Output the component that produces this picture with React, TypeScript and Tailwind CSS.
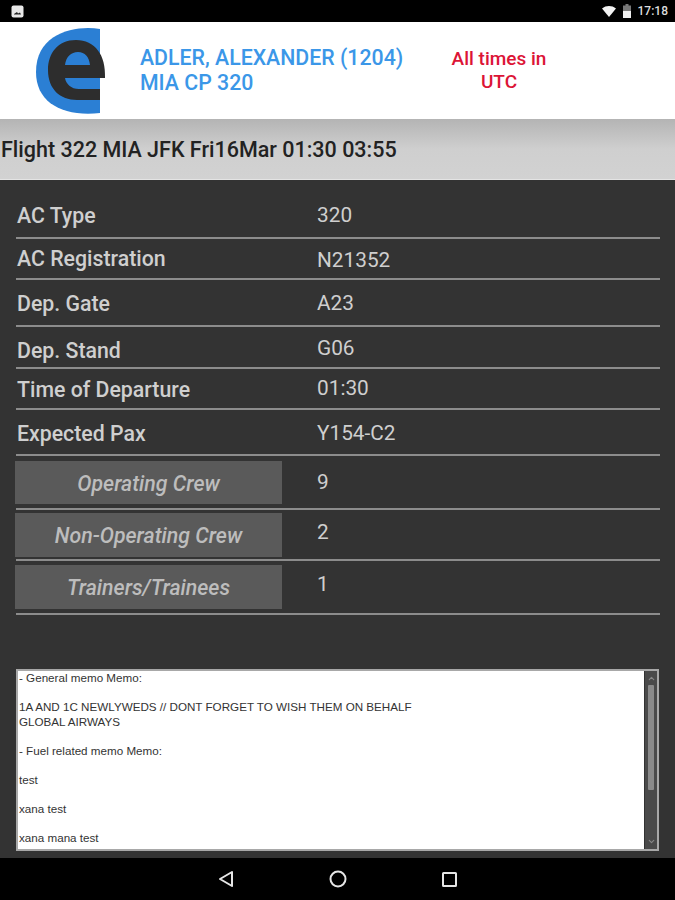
import { ChevronDown, ChevronUp } from 'lucide-react';

const rows = [
  { label: 'AC Type', value: '320', h: 'h-[45px]', labelCls: 'pt-[1px]', valueCls: 'pt-[1px]' },
  { label: 'AC Registration', value: 'N21352', h: 'h-[41px]', labelCls: 'pt-[1px]', valueCls: 'pt-[5px]' },
  { label: 'Dep. Gate', value: 'A23', h: 'h-[47px]', labelCls: 'pt-[3px]', valueCls: 'pt-[3px]' },
  { label: 'Dep. Stand', value: 'G06', h: 'h-[42px]', labelCls: 'pt-[7px]', valueCls: 'pt-[3px]' },
  { label: 'Time of Departure', value: '01:30', h: 'h-[41px]', labelCls: 'pt-[3px]', valueCls: 'pt-[1px]' },
  { label: 'Expected Pax', value: 'Y154-C2', h: 'h-[46px]', labelCls: 'pt-[3px]', valueCls: 'pt-[3px]' },
];

const crew = [
  { label: 'Operating Crew', value: '9', h: 'h-[54px]', btn: 'h-[43px] pt-[3px]', valueCls: 'pt-[1px]' },
  { label: 'Non-Operating Crew', value: '2', h: 'h-[51px]', btn: 'h-[44px] pt-[2px]', valueCls: 'pb-[3px]' },
  { label: 'Trainers/Trainees', value: '1', h: 'h-[54px]', btn: 'h-[44px] pt-[2px]', valueCls: 'pb-[5px]' },
];

function Logo() {
  return (
    <svg width="72" height="88" viewBox="0 0 72 88" className="ml-[35px] shrink-0">
      <path d="M65 2 C40 -2 1 6 1 45 C1 76 28 90 65 86 Z" fill="#2b7fd4" />
      <path
        d="M41 13 C23 13 13 26 13 43 C13 62 25 73 42 73 L65 73 L65 62 L44 62 C36 62 31 57 30 51 L70 51 C71 28 60 13 41 13 Z M30 38 C31 30 36 25 43 25 C50 25 54 30 55 38 Z"
        fill="#2d2d2d"
        fillRule="evenodd"
      />
    </svg>
  );
}

export default function App() {
  return (
    <div className="w-[675px] h-[900px] flex flex-col bg-[#333333] font-['Roboto',sans-serif] overflow-hidden">
      {/* status bar */}
      <div className="h-[22px] bg-black flex items-center justify-between pl-[11px] pr-[7px] shrink-0">
        <svg width="13" height="13" viewBox="0 0 13 13">
          <rect x="0.5" y="0.5" width="12" height="12" rx="2" fill="#e8e8e8" />
          <path d="M3 9 L6 7 L7 8.5 L9 7.5 L10 9.5 L3 9.5 Z" fill="#222" />
        </svg>
        <div className="flex items-center gap-[7px] text-[12px] font-medium text-[#dddddd]">
          <svg width="14" height="11" viewBox="0 0 14 11">
            <path d="M0 2.5 C4 -0.8 10 -0.8 14 2.5 L7 11 Z" fill="#f2f2f2" />
          </svg>
          <svg width="8" height="14" viewBox="0 0 8 14">
            <path d="M2.5 0 H5.5 V1.5 H8 V14 H0 V1.5 H2.5 Z" fill="#777" />
            <rect x="0" y="7" width="8" height="7" fill="#eeeeee" />
          </svg>
          <span>17:18</span>
        </div>
      </div>

      {/* header */}
      <div className="h-[97px] bg-white flex items-center shrink-0">
        <Logo />
        <div className="ml-[33px] mb-[2px] w-[290px] text-[21.3px] leading-[25px] font-medium text-[#3b97e8]">
          <div>ADLER, ALEXANDER (1204)</div>
          <div>MIA CP 320</div>
        </div>
        <div className="ml-[9px] mb-[2px] w-[120px] text-center text-[19px] leading-[23px] font-medium text-[#dc1436]">
          All times in
          <br />
          UTC
        </div>
      </div>

      {/* flight bar */}
      <div className="h-[61px] flex items-center pl-[1px] pt-[2px] shrink-0 bg-gradient-to-b from-[#b4b4b4] via-[#cfcfcf] to-[#d2d2d2] border-b border-[#e4e4e4]">
        <span className="text-[21.5px] font-medium text-[#222222]">Flight 322 MIA JFK Fri16Mar 01:30 03:55</span>
      </div>

      {/* details */}
      <div className="flex-1 min-h-0 flex flex-col pt-[14px] px-[16px] pr-[15px]">
        {rows.map((r) => (
          <div key={r.label} className={`${r.h} shrink-0 flex items-center border-b-2 border-[#8c8c8c]`}>
            <div className={`w-[301px] pl-[1px] text-[21.3px] font-medium text-[#cfcfcf] ${r.labelCls}`}>{r.label}</div>
            <div className={`text-[20.8px] text-[#cfcfcf] ${r.valueCls}`}>{r.value}</div>
          </div>
        ))}
        {crew.map((c) => (
          <div key={c.label} className={`${c.h} shrink-0 flex items-center border-b-2 border-[#8c8c8c]`}>
            <div
              className={`${c.btn} -ml-[1px] w-[267px] shrink-0 flex items-center justify-center bg-[#5a5a5a] text-[21.3px] font-medium italic text-[#bdbdbd]`}
            >
              {c.label}
            </div>
            <div className={`ml-[35px] text-[20.8px] text-[#cfcfcf] ${c.valueCls}`}>{c.value}</div>
          </div>
        ))}

        {/* memo */}
        <div className="mt-[54px] mr-[1px] h-[182px] shrink-0 flex bg-white border-2 border-[#a8a8a8]">
          <div className="flex-1 min-w-0 pl-[1px] text-[11.65px] leading-[14.5px] font-['Liberation_Sans',sans-serif] text-[#333333] overflow-hidden">
            <div>- General memo Memo:</div>
            <div className="mt-[14.5px] w-[410px]">1A AND 1C NEWLYWEDS // DONT FORGET TO WISH THEM ON BEHALF GLOBAL AIRWAYS</div>
            <div className="mt-[14.5px]">- Fuel related memo Memo:</div>
            <div className="mt-[14.5px]">test</div>
            <div className="mt-[14.5px]">xana test</div>
            <div className="mt-[14.5px]">xana mana test</div>
          </div>
          <div className="w-[13px] shrink-0 flex flex-col items-center bg-[#4a4a4a] border-l border-[#333333] text-[#888888]">
            <ChevronUp size={9} strokeWidth={3} className="mt-[3px] shrink-0" />
            <div className="mt-[2px] w-[6px] h-[105px] bg-[#8a8a8a] rounded-[1px]" />
            <div className="flex-1" />
            <ChevronDown size={9} strokeWidth={3} className="mb-[3px] shrink-0" />
          </div>
        </div>
      </div>

      {/* nav bar */}
      <div className="h-[42px] bg-black shrink-0 flex items-center justify-center gap-[95px] pr-[1px]">
        <svg width="16" height="18" viewBox="0 0 16 18">
          <path d="M14 2 L2 9 L14 16 Z" fill="none" stroke="#e6e6e6" strokeWidth="2" strokeLinejoin="round" />
        </svg>
        <svg width="18" height="18" viewBox="0 0 18 18">
          <circle cx="9" cy="9" r="7.5" fill="none" stroke="#e6e6e6" strokeWidth="2" />
        </svg>
        <svg width="15" height="15" viewBox="0 0 15 15">
          <rect x="1" y="1" width="13" height="13" rx="0.5" fill="none" stroke="#e6e6e6" strokeWidth="2" />
        </svg>
      </div>
    </div>
  );
}
